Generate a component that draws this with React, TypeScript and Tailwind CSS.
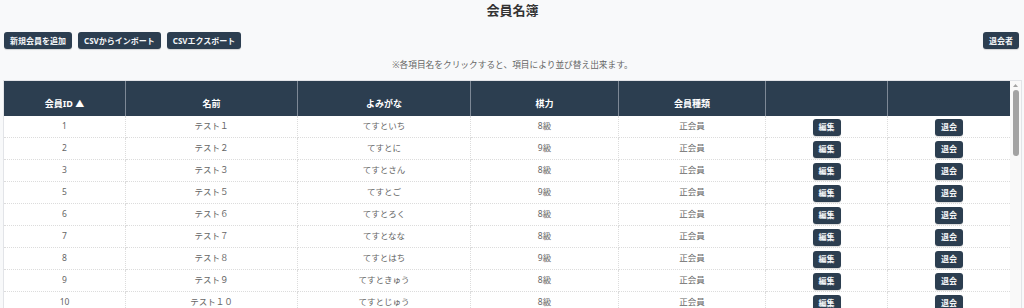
import React from 'react';

interface Member {
  id: number;
  name: string;
  kana: string;
  rank: string;
  kind: string;
}

const members: Member[] = [
  { id: 1, name: 'テスト１', kana: 'てすといち', rank: '8級', kind: '正会員' },
  { id: 2, name: 'テスト２', kana: 'てすとに', rank: '9級', kind: '正会員' },
  { id: 3, name: 'テスト３', kana: 'てすとさん', rank: '8級', kind: '正会員' },
  { id: 5, name: 'テスト５', kana: 'てすとご', rank: '9級', kind: '正会員' },
  { id: 6, name: 'テスト６', kana: 'てすとろく', rank: '8級', kind: '正会員' },
  { id: 7, name: 'テスト７', kana: 'てすとなな', rank: '8級', kind: '正会員' },
  { id: 8, name: 'テスト８', kana: 'てすとはち', rank: '9級', kind: '正会員' },
  { id: 9, name: 'テスト９', kana: 'てすときゅう', rank: '8級', kind: '正会員' },
  { id: 10, name: 'テスト１０', kana: 'てすとじゅう', rank: '8級', kind: '正会員' },
];

const colWidths = [122, 172, 173, 148, 147, 122, 122];
const headers = ['会員ID ▲', '名前', 'よみがな', '棋力', '会員種類', '', ''];

const DarkButton: React.FC<{ children: React.ReactNode }> = ({ children }) => (
  <button className="inline-flex items-center justify-center align-middle h-[17px] px-[6px] rounded-[3px] bg-[#2c3e50] text-[#f4f6f8] text-[8px] font-bold leading-none whitespace-nowrap shadow-[0_1px_1px_rgba(0,0,0,0.15)]">
    {children}
  </button>
);

// headless screenshots hide native scrollbars, so the table's one is drawn
const ScrollBar = () => (
  <div className="w-[11px] shrink-0 bg-[#f9f9f9] flex flex-col items-center">
    <svg width="7" height="9" viewBox="0 0 7 9" className="shrink-0">
      <path d="M1 6 L3.5 3 L6 6 Z" fill="#a3a3a3" />
    </svg>
    <div className="w-[6px] h-[66px] rounded-full bg-[#a3a3a3]" />
  </div>
);

export default function App() {
  return (
    <div className="h-screen overflow-hidden bg-[#f8f9fa] pl-[3px] pr-[2px] font-['Noto_Sans','Noto_Sans_CJK_JP',sans-serif]">
      <div className="h-[21px] flex items-center justify-center">
        <h1 className="text-[13px] font-bold text-[#333] leading-none">会員名簿</h1>
      </div>

      <div className="mt-[11px] flex items-center justify-between pl-[1px] pr-[3px]">
        <div className="flex gap-[6px]">
          <DarkButton>新規会員を追加</DarkButton>
          <DarkButton>CSVからインポート</DarkButton>
          <DarkButton>CSVエクスポート</DarkButton>
        </div>
        <DarkButton>退会者</DarkButton>
      </div>

      <p className="mt-[10px] h-[12px] leading-[12px] text-center text-[8.7px] text-[#666]">
        ※各項目名をクリックすると、項目により並び替え出来ます。
      </p>

      <div className="mt-[9px] h-[280px] overflow-hidden flex border border-[#e2e4e8] bg-white">
        <table className="w-[1006px] shrink-0 table-fixed border-separate border-spacing-0 self-start">
          <colgroup>
            {colWidths.map((w, i) => (
              <col key={i} style={{ width: w }} />
            ))}
          </colgroup>
          <thead>
            <tr>
              {headers.map((h, i) => (
                <th
                  key={i}
                  className={`h-[35px] align-bottom pb-[8px] bg-[#2c3e50] text-white text-[9px] font-bold text-center leading-none ${
                    i < headers.length - 1 ? 'border-r border-[#7d8896]' : ''
                  }`}
                >
                  {h}
                </th>
              ))}
            </tr>
          </thead>
          <tbody>
            {members.map((m) => (
              <tr key={m.id}>
                {[m.id, m.name, m.kana, m.rank, m.kind].map((v, i) => (
                  <td
                    key={i}
                    className="h-[22px] p-0 text-center align-middle leading-none text-[8.5px] text-[#666] border-b border-r border-dotted border-[#dcdcdc]"
                  >
                    {v}
                  </td>
                ))}
                <td className="h-[22px] p-0 text-center align-middle leading-none border-b border-r border-dotted border-[#dcdcdc]">
                  <DarkButton>編集</DarkButton>
                </td>
                <td className="h-[22px] p-0 text-center align-middle leading-none border-b border-dotted border-[#dcdcdc]">
                  <DarkButton>退会</DarkButton>
                </td>
              </tr>
            ))}
          </tbody>
        </table>
        <ScrollBar />
      </div>
    </div>
  );
}
